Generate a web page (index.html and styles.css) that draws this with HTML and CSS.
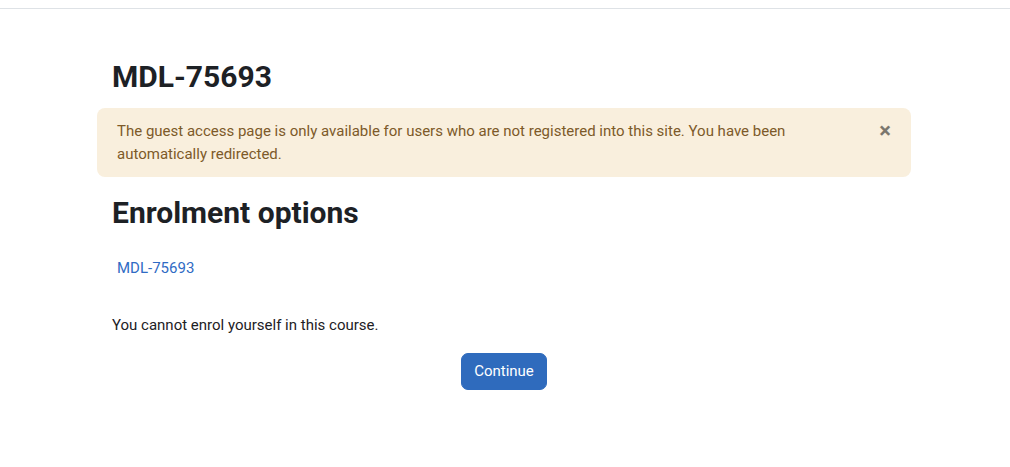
FILE: index.html
```html
<!DOCTYPE html>
<html lang="en">
  <head>
    <meta charset="utf-8">
    <title>MDL-75693: Enrolment options</title>
    <link rel="stylesheet" href="styles.css">
  </head>
  <body>
    <div id="top-bar"></div>
    <div id="page">
      <h1 class="page-title">MDL-75693</h1>
      <div class="alert alert-warning">
        The guest access page is only available for users who are not registered into this site. You have been automatically redirected.
        <button class="close" aria-label="Dismiss">&times;</button>
      </div>
      <h2 class="page-title">Enrolment options</h2>
      <div class="course-box">
        <a href="#">MDL-75693</a>
      </div>
      <p class="notice">You cannot enrol yourself in this course.</p>
      <div class="buttons">
        <button class="btn-primary">Continue</button>
      </div>
    </div>
  </body>
</html>
```

FILE: styles.css
```css
body {
  margin: 0;
  font-family: Roboto, "Liberation Sans", sans-serif;
  font-size: 15px;
  line-height: 1.5;
  color: #1d2125;
  background: white;
}
#top-bar {
  height: 8px;
  border-bottom: 1px solid #dee2e6;
}
#page {
  width: 814px;
  margin-left: 97px;
}
.page-title {
  font-size: 30px;
  font-weight: 700;
  line-height: 1.2;
  padding-left: 15px;
  margin: 0;
}
h1.page-title {
  margin-top: 50px;
  margin-bottom: 13px;
}
h2.page-title {
  margin-top: 18px;
}
.alert {
  position: relative;
  padding: 12px 64px 12px 20px;
  border-radius: 8px;
  background: #f9efdd;
  color: #7d5a29;
}
.close {
  position: absolute;
  top: 0;
  right: 0;
  padding: 12px 20px;
  border: none;
  background: transparent;
  font-family: inherit;
  font-size: 22px;
  font-weight: 700;
  line-height: 1;
  color: #000;
  opacity: 0.5;
  cursor: pointer;
}
.course-box {
  padding: 26px 0 0 20px;
}
.course-box a {
  color: #2f6bc4;
  text-decoration: none;
}
.notice {
  margin: 34px 0 17px;
  padding-left: 15px;
}
.buttons {
  display: flex;
  justify-content: center;
}
.btn-primary {
  font-family: inherit;
  font-size: 15px;
  line-height: 1.5;
  padding: 6px 12px;
  border: 1px solid #2f6bbd;
  border-radius: 7px;
  background: #2f6bbd;
  color: white;
  cursor: pointer;
}
```
